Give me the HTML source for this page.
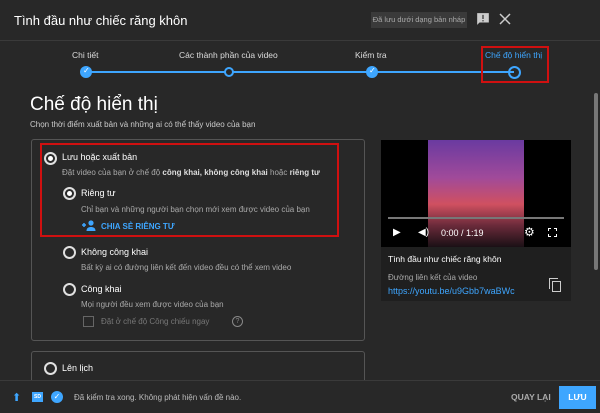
<!DOCTYPE html>
<html><head><meta charset="utf-8"><style>
*{margin:0;padding:0;box-sizing:border-box}
body{width:600px;height:413px;background:#282828;font-family:"Liberation Sans",sans-serif;color:#fff;position:relative;overflow:hidden}
.a{position:absolute;white-space:nowrap}
.radio{position:absolute;width:13px;height:13px;border:2px solid #e0e0e0;border-radius:50%}
.radio.on::after{content:"";position:absolute;left:2px;top:2px;width:5px;height:5px;border-radius:50%;background:#fff}
.g{color:#aaa;font-size:8px}
.dot{position:absolute;width:12px;height:12px;border-radius:50%;background:#3ea6ff;top:66px}
.ring{position:absolute;width:10px;height:10px;border:2px solid #3ea6ff;border-radius:50%;background:#282828;top:67px}
</style></head><body>
<div class="a" style="left:14px;top:13px;font-size:13px">Tình đầu như chiếc răng khôn</div>
<div class="a" style="left:371px;top:12px;width:96px;height:16px;background:#3a3a3a;color:#aaa;font-size:7.5px;line-height:16px;text-align:center">Đã lưu dưới dạng bản nháp</div>
<svg class="a" style="left:476px;top:12px" width="14" height="14" viewBox="0 0 24 24"><path d="M2 2h20v16H6l-4 4z" fill="#ccc"/><path d="M11 5h2v7h-2zM11 14h2v2h-2z" fill="#282828"/></svg>
<svg class="a" style="left:499px;top:13px" width="12" height="12" viewBox="0 0 12 12"><path d="M1 1L11 11M11 1L1 11" stroke="#ccc" stroke-width="1.5"/></svg>
<div class="a" style="left:0;top:40px;width:600px;height:1px;background:#3a3a3a"></div>
<div class="a" style="left:86px;top:71px;width:428px;height:2px;background:#3ea6ff"></div>
<div class="a" style="left:72px;top:50px;font-size:8.5px;color:#ddd">Chi tiết</div>
<div class="a" style="left:179px;top:50px;font-size:8.5px;color:#ddd">Các thành phần của video</div>
<div class="a" style="left:355px;top:50px;font-size:8.5px;color:#ddd">Kiểm tra</div>
<div class="a" style="left:485px;top:50px;font-size:8.5px;color:#3ea6ff">Chế độ hiển thị</div>
<div class="dot" style="left:80px"></div><div class="a" style="left:83px;top:66px;font-size:8px;color:#fff">✓</div>
<div class="ring" style="left:224px"></div>
<div class="dot" style="left:366px"></div><div class="a" style="left:369px;top:66px;font-size:8px;color:#fff">✓</div>
<div class="a" style="left:508px;top:66px;width:13px;height:13px;border:2px solid #3ea6ff;border-radius:50%"></div>
<div class="a" style="left:481px;top:46px;width:68px;height:37px;border:2px solid #d01010"></div>
<div class="a" style="left:30px;top:94px;font-size:19px">Chế độ hiển thị</div>
<div class="a" style="left:30px;top:120px;font-size:8px;color:#ccc">Chọn thời điểm xuất bản và những ai có thể thấy video của bạn</div>
<div class="a" style="left:31px;top:139px;width:334px;height:202px;border:1px solid #555;border-radius:3px"></div>
<div class="a" style="left:40px;top:143px;width:299px;height:94px;border:2px solid #d01010"></div>
<div class="radio on" style="left:44px;top:152px"></div>
<div class="a" style="left:62px;top:152px;font-size:9px">Lưu hoặc xuất bản</div>
<div class="a g" style="left:62px;top:168px;color:#aaa">Đặt video của bạn ở chế độ <b style="color:#ddd">công khai, không công khai</b> hoặc <b style="color:#ddd">riêng tư</b></div>
<div class="radio on" style="left:63px;top:187px"></div>
<div class="a" style="left:81px;top:188px;font-size:9px">Riêng tư</div>
<div class="a g" style="left:81px;top:205px">Chỉ bạn và những người bạn chọn mới xem được video của bạn</div>
<svg class="a" style="left:82px;top:220px" width="14" height="11" viewBox="0 0 14 11"><path d="M0 5h4M2 3v4" stroke="#3ea6ff" stroke-width="1.5"/><circle cx="9" cy="3" r="2.6" fill="#3ea6ff"/><path d="M4.5 11c0-3 2-4 4.5-4s4.5 1 4.5 4z" fill="#3ea6ff"/></svg>
<div class="a" style="left:101px;top:222px;font-size:8px;color:#3ea6ff;font-weight:bold">CHIA SẺ RIÊNG TƯ</div>
<div class="radio" style="left:63px;top:246px"></div>
<div class="a" style="left:81px;top:247px;font-size:9px">Không công khai</div>
<div class="a g" style="left:81px;top:263px">Bất kỳ ai có đường liên kết đến video đều có thể xem video</div>
<div class="radio" style="left:63px;top:283px"></div>
<div class="a" style="left:81px;top:284px;font-size:9px">Công khai</div>
<div class="a g" style="left:81px;top:300px">Mọi người đều xem được video của bạn</div>
<div class="a" style="left:83px;top:316px;width:11px;height:11px;border:1px solid #666"></div>
<div class="a" style="left:101px;top:317px;font-size:8px;color:#777">Đặt ở chế độ Công chiếu ngay</div>
<div class="a" style="left:232px;top:316px;width:11px;height:11px;border:1px solid #888;border-radius:50%;font-size:7px;color:#888;text-align:center;line-height:9px">?</div>
<div class="a" style="left:31px;top:351px;width:334px;height:40px;border:1px solid #555;border-radius:3px"></div>
<div class="radio" style="left:44px;top:362px"></div>
<div class="a" style="left:62px;top:363px;font-size:9px">Lên lịch</div>
<div class="a" style="left:381px;top:140px;width:190px;height:161px;background:#1f1f1f"></div>
<div class="a" style="left:381px;top:140px;width:190px;height:107px;background:#000"></div>
<div class="a" style="left:428px;top:140px;width:96px;height:107px;background:linear-gradient(#6a3aa0,#a04a9a 35%,#d05060 60%,#6a2a3a 80%,#1a1015)"></div>
<div class="a" style="left:388px;top:217px;width:176px;height:2px;background:#777"></div>
<div class="a" style="left:393px;top:227px;font-size:10px;color:#fff">▶</div>
<div class="a" style="left:418px;top:227px;font-size:10px;color:#fff">◀)</div>
<div class="a" style="left:441px;top:228px;font-size:9px;color:#fff">0:00 / 1:19</div>
<div class="a" style="left:524px;top:225px;font-size:12px;color:#fff">⚙</div>
<div class="a" style="left:548px;top:228px;width:9px;height:9px;border:1px dashed #fff"></div>
<div class="a" style="left:388px;top:254px;font-size:8.5px">Tình đầu như chiếc răng khôn</div>
<div class="a" style="left:388px;top:273px;font-size:8px;color:#aaa">Đường liên kết của video</div>
<div class="a" style="left:388px;top:286px;font-size:9px;color:#3ea6ff">https://youtu.be/u9Gbb7waBWc</div>
<div class="a" style="left:549px;top:278px;width:9px;height:11px;border:1.5px solid #ccc;border-right:none;border-bottom:none"></div>
<div class="a" style="left:552px;top:281px;width:9px;height:11px;border:1.5px solid #ccc"></div>
<div class="a" style="left:594px;top:93px;width:4px;height:177px;background:#777;border-radius:2px"></div>
<div class="a" style="left:0;top:380px;width:600px;height:33px;background:#282828;border-top:1px solid #3a3a3a"></div>
<div class="a" style="left:12px;top:391px;font-size:11px;color:#3ea6ff">⬆</div>
<div class="a" style="left:32px;top:392px;width:11px;height:10px;background:#3ea6ff;font-size:5px;color:#fff;text-align:center;line-height:10px;font-weight:bold">SD</div>
<div class="a" style="left:51px;top:391px;width:12px;height:12px;border-radius:50%;background:#3ea6ff;font-size:8px;text-align:center;line-height:12px">✓</div>
<div class="a" style="left:74px;top:393px;font-size:8px;color:#bbb">Đã kiểm tra xong. Không phát hiện vấn đề nào.</div>
<div class="a" style="left:511px;top:392px;font-size:8.5px;color:#aaa;font-weight:bold">QUAY LẠI</div>
<div class="a" style="left:559px;top:386px;width:37px;height:23px;background:#3ea6ff;font-size:8.5px;color:#fff;text-align:center;line-height:23px;font-weight:bold">LƯU</div>
</body></html>
